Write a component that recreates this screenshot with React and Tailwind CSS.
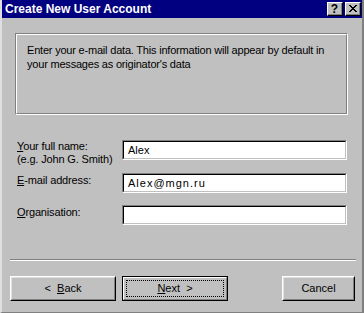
import React from 'react';

const font = { fontFamily: '"Liberation Sans", Arial, sans-serif' };

function TitleButton({ children }) {
    return (
        <div className="w-[16px] h-[14px] border border-t-white border-l-white border-b-black border-r-black">
            <div className="w-full h-full bg-[#c0c0c0] border-b border-r border-b-[#808080] border-r-[#808080] flex items-center justify-center">
                {children}
            </div>
        </div>
    );
}

function Field({ value, wide }) {
    return (
        <div className="w-[225px] h-[20px] border border-t-[#808080] border-l-[#808080] border-b-white border-r-white">
            <div className="w-full h-full bg-white border border-t-black border-l-black border-b-[#c0c0c0] border-r-[#c0c0c0] pl-[4px] flex items-center">
                <span className={`text-[11px] text-black leading-none ${wide ? 'tracking-[1px]' : ''}`}>{value}</span>
            </div>
        </div>
    );
}

function Button({ children, width, isDefault }) {
    if (isDefault) {
        return (
            <div className={`${width} h-[25px] border border-black`}>
                <div className="w-full h-full border border-t-white border-l-white border-b-[#808080] border-r-[#808080] p-[2px]">
                    <div className="w-full h-full border border-dotted border-black flex items-center justify-center text-[11px] text-black">
                        {children}
                    </div>
                </div>
            </div>
        );
    }
    return (
        <div className={`${width} h-[25px] border border-t-white border-l-white border-b-black border-r-black`}>
            <div className="w-full h-full border border-t-[#dfdfdf] border-l-[#dfdfdf] border-b-[#808080] border-r-[#808080] flex items-center justify-center text-[11px] text-black">
                {children}
            </div>
        </div>
    );
}

export default function App() {
    return (
        <div
            className="w-[364px] h-[313px] bg-[#c0c0c0] flex flex-col border-l-2 border-l-[#dfdfdf] border-r-2 border-r-[#808080] border-b border-b-[#808080] overflow-hidden"
            style={font}
        >
            {/* Title bar */}
            <div className="h-[18px] bg-[#000080] flex items-center justify-between pl-[3px] pr-[1px]">
                <span className="text-white font-bold text-[12px] leading-none">Create New User Account</span>
                <div className="flex gap-[2px]">
                    <TitleButton>
                        <span className="text-black font-bold text-[12px] leading-none">?</span>
                    </TitleButton>
                    <TitleButton>
                        <svg width="8" height="7" viewBox="0 0 8 7" shapeRendering="crispEdges">
                            <path d="M0 0h2v1H0zM6 0h2v1H6zM1 1h2v1H1zM5 1h2v1H5zM2 2h4v1H2zM3 3h2v1H3zM2 4h4v1H2zM1 5h2v1H1zM5 5h2v1H5zM0 6h2v1H0zM6 6h2v1H6z" fill="#000" />
                        </svg>
                    </TitleButton>
                </div>
            </div>

            {/* Info panel */}
            <div className="ml-[13px] mt-[15px] w-[333px] h-[82px] border border-t-[#808080] border-l-[#808080] border-b-white border-r-white">
                <div className="w-full h-full border border-t-white border-l-white border-b-[#808080] border-r-[#808080] pl-[10px] pt-[8px]">
                    <p className="text-[11px] leading-[14px] tracking-[-0.2px] text-black">
                        Enter your e-mail data. This information will appear by default in
                        <br />
                        your messages as originator's data
                    </p>
                </div>
            </div>

            {/* Form */}
            <div className="ml-[15px] mt-[25px] flex">
                <div className="w-[105px] text-[11px] leading-[13px] tracking-[-0.15px] text-black">
                    <div><span className="underline">Y</span>our full name:</div>
                    <div>(e.g. John G. Smith)</div>
                </div>
                <Field value="Alex" />
            </div>
            <div className="ml-[15px] mt-[7px] flex">
                <div className="w-[105px] text-[11px] leading-[13px] tracking-[-0.15px] text-black pt-[1px]">
                    <span className="underline">E</span>-mail address:
                </div>
                <Field value="Alex@mgn.ru" wide />
            </div>
            <div className="ml-[15px] mt-[12px] flex">
                <div className="w-[105px] text-[11px] leading-[13px] tracking-[-0.15px] text-black pt-[1px]">
                    <span className="underline">O</span>rganisation:
                </div>
                <Field value="" />
            </div>

            {/* Separator */}
            <div className="ml-[8px] mt-[34px] w-[346px] border-t border-t-[#808080] border-b border-b-white" />

            {/* Buttons */}
            <div className="ml-[8px] mt-[15px] flex">
                <Button width="w-[106px]">
                    <span>&lt;&nbsp;&nbsp;<span className="underline">B</span>ack</span>
                </Button>
                <div className="ml-[6px]">
                    <Button width="w-[106px]" isDefault>
                        <span><span className="underline">N</span>ext&nbsp;&nbsp;&gt;</span>
                    </Button>
                </div>
                <div className="ml-[54px]">
                    <Button width="w-[73px]">
                        <span>Cancel</span>
                    </Button>
                </div>
            </div>
        </div>
    );
}
